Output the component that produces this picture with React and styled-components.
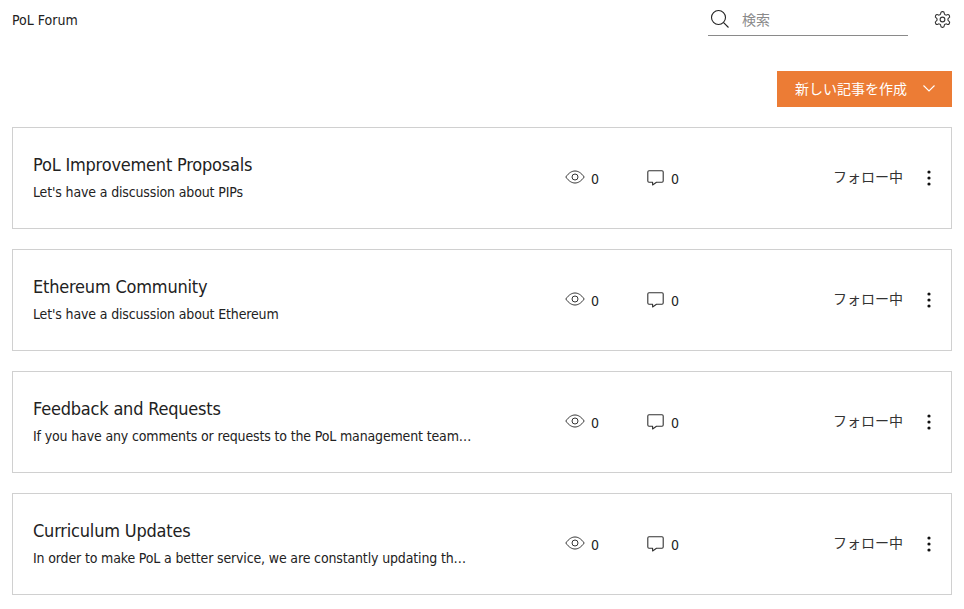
import React from 'react'
import styled, { createGlobalStyle } from 'styled-components'

const Global = createGlobalStyle`
  html, body {
    margin: 0;
    background: #fff;
    font-family: "DejaVu Sans Condensed", "Noto Sans CJK JP", sans-serif;
    color: #222;
  }
`

const Page = styled.div`
  width: 964px;
  height: 609px;
  padding: 0 12px;
  box-sizing: border-box;
  overflow: hidden;
`

const Header = styled.header`
  height: 71px;
  display: flex;
  align-items: flex-start;
  justify-content: space-between;
`

const Brand = styled.div`
  font-size: 14px;
  line-height: 20px;
  margin-top: 10px;
`

const HeaderRight = styled.div`
  display: flex;
  align-items: flex-start;
`

const Search = styled.div`
  width: 200px;
  height: 36px;
  box-sizing: border-box;
  border-bottom: 1px solid #8a8a8a;
  display: flex;
  align-items: center;
  gap: 12px;
  padding: 3px 0 0 2px;
  font-size: 14px;
  color: #8a8a8a;
`

const Settings = styled.div`
  margin: 10px 0 0 25px;
  height: 16px;
`

const Actions = styled.div`
  display: flex;
  justify-content: flex-end;
  margin-bottom: 20px;
`

const CreateButton = styled.button`
  width: 175px;
  height: 36px;
  border: 0;
  background: #ec7c35;
  color: #fff;
  font: inherit;
  font-size: 14px;
  display: flex;
  align-items: center;
  justify-content: space-between;
  padding: 0 17px 2px 18px;
`

const List = styled.div`
  display: flex;
  flex-direction: column;
  gap: 20px;
`

const Card = styled.article`
  height: 102px;
  box-sizing: border-box;
  border: 1px solid #d0d0d0;
  display: flex;
  align-items: center;
  padding: 0 12px 0 20px;
`

const Info = styled.div`
  width: 532px;
  padding-bottom: 2px;
`

const Title = styled.h2`
  margin: 0;
  font-size: 18px;
  font-weight: 400;
  line-height: 26px;
  letter-spacing: -0.2px;
  color: #222;
`

const Desc = styled.p`
  margin: 4px 0 0;
  font-size: 14px;
  line-height: 20px;
  letter-spacing: -0.15px;
  width: 440px;
  white-space: nowrap;
  overflow: hidden;
  text-overflow: ellipsis;
`

const Stat = styled.div`
  width: ${props => props.$width}px;
  display: flex;
  align-items: center;
  gap: ${props => props.$gap}px;
  font-size: 14px;

  svg {
    margin-bottom: ${props => props.$lift}px;
  }
`

const Count = styled.span`
  padding-top: 2px;
`

const Follow = styled.div`
  margin-left: auto;
  font-size: 14px;
  color: #333;
  padding-bottom: 4px;
`

const More = styled.div`
  margin-left: 16px;
  width: 20px;
  display: flex;
  justify-content: center;
`

const SearchIcon = () => (
  <svg width="20" height="20" viewBox="0 0 20 20" fill="none" stroke="#222" strokeWidth="1.1">
    <circle cx="8.5" cy="8.5" r="7" />
    <path d="M13.6 13.6 L18.5 18.5" />
  </svg>
)

const GearIcon = () => (
  <svg width="19" height="19" viewBox="0 0 24 24" fill="none" stroke="#333" strokeWidth="1.4" strokeLinejoin="round">
    <path d="M12.22 2h-.44a2 2 0 0 0-2 2v.18a2 2 0 0 1-1 1.73l-.43.25a2 2 0 0 1-2 0l-.15-.08a2 2 0 0 0-2.73.73l-.22.38a2 2 0 0 0 .73 2.73l.15.1a2 2 0 0 1 1 1.72v.51a2 2 0 0 1-1 1.74l-.15.09a2 2 0 0 0-.73 2.73l.22.38a2 2 0 0 0 2.73.73l.15-.08a2 2 0 0 1 2 0l.43.25a2 2 0 0 1 1 1.73V20a2 2 0 0 0 2 2h.44a2 2 0 0 0 2-2v-.18a2 2 0 0 1 1-1.73l.43-.25a2 2 0 0 1 2 0l.15.08a2 2 0 0 0 2.73-.73l.22-.39a2 2 0 0 0-.73-2.73l-.15-.08a2 2 0 0 1-1-1.74v-.5a2 2 0 0 1 1-1.74l.15-.09a2 2 0 0 0 .73-2.73l-.22-.38a2 2 0 0 0-2.73-.73l-.15.08a2 2 0 0 1-2 0l-.43-.25a2 2 0 0 1-1-1.73V4a2 2 0 0 0-2-2z" />
    <circle cx="12" cy="12" r="3" />
  </svg>
)

const ChevronIcon = () => (
  <svg width="12" height="7" viewBox="0 0 12 7" fill="none" stroke="#fff" strokeWidth="1.1">
    <path d="M0.5 0.5 L6 6 L11.5 0.5" />
  </svg>
)

const EyeIcon = () => (
  <svg width="20" height="14" viewBox="0 0 20 14" fill="none" stroke="#333" strokeWidth="1">
    <path d="M0.8 7 C4 2.6 7 1 10 1 C13 1 16 2.6 19.2 7 C16 11.4 13 13 10 13 C7 13 4 11.4 0.8 7 Z" />
    <circle cx="10" cy="7" r="3" />
  </svg>
)

const CommentIcon = () => (
  <svg width="17" height="16" viewBox="0 0 17 16" fill="none" stroke="#333" strokeWidth="1.1" strokeLinejoin="round">
    <path d="M2 0.8 H15 C15.7 0.8 16.2 1.3 16.2 2 V11 C16.2 11.7 15.7 12.2 15 12.2 H9.5 L5.6 15 V12.2 H2 C1.3 12.2 0.8 11.7 0.8 11 V2 C0.8 1.3 1.3 0.8 2 0.8 Z" />
  </svg>
)

const DotsIcon = () => (
  <svg width="4" height="16" viewBox="0 0 4 16" fill="#111">
    <circle cx="2" cy="2" r="1.6" />
    <circle cx="2" cy="8" r="1.6" />
    <circle cx="2" cy="14" r="1.6" />
  </svg>
)

const forums = [
  { title: 'PoL Improvement Proposals', desc: "Let's have a discussion about PIPs" },
  { title: 'Ethereum Community', desc: "Let's have a discussion about Ethereum" },
  { title: 'Feedback and Requests', desc: 'If you have any comments or requests to the PoL management team, please let us know here' },
  { title: 'Curriculum Updates', desc: 'In order to make PoL a better service, we are constantly updating the curriculum' },
]

const ForumCard = ({ title, desc }) => (
  <Card>
    <Info>
      <Title>{title}</Title>
      <Desc>{desc}</Desc>
    </Info>
    <Stat $width={82} $gap={6} $lift={2}><EyeIcon /><Count>0</Count></Stat>
    <Stat $width={60} $gap={7} $lift={0}><CommentIcon /><Count>0</Count></Stat>
    <Follow>フォロー中</Follow>
    <More><DotsIcon /></More>
  </Card>
)

const App = () => (
  <Page>
    <Global />
    <Header>
      <Brand>PoL Forum</Brand>
      <HeaderRight>
        <Search><SearchIcon />検索</Search>
        <Settings><GearIcon /></Settings>
      </HeaderRight>
    </Header>
    <Actions>
      <CreateButton>新しい記事を作成<ChevronIcon /></CreateButton>
    </Actions>
    <List>
      {forums.map(f => <ForumCard key={f.title} {...f} />)}
    </List>
  </Page>
)

export default App
